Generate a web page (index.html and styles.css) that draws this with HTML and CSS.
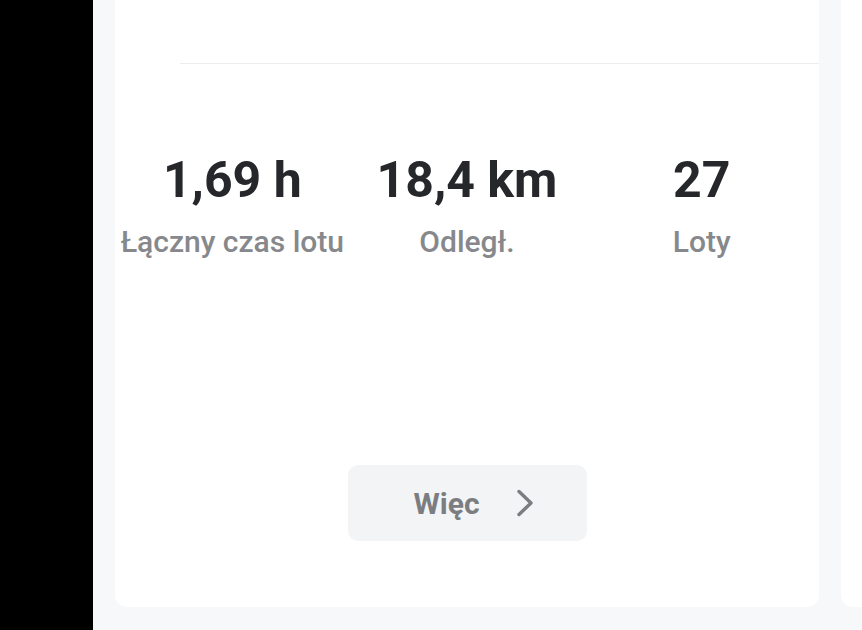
FILE: index.html
```html
<!DOCTYPE html>
<html lang="pl">
<head>
<meta charset="utf-8">
<link rel="stylesheet" href="styles.css">
</head>
<body>
<div class="screen">
  <div class="side"></div>
  <div class="main">
    <div class="card">
      <div class="divider"></div>
      <div class="stats">
        <div class="stat">
          <div class="value">1,69 h</div>
          <div class="label">Łączny czas lotu</div>
        </div>
        <div class="stat">
          <div class="value">18,4 km</div>
          <div class="label">Odległ.</div>
        </div>
        <div class="stat">
          <div class="value">27</div>
          <div class="label">Loty</div>
        </div>
      </div>
      <div class="more-wrap">
        <div class="more">
          <span class="more-text">Więc</span>
          <svg class="chev" width="18" height="28" viewBox="0 0 18 28"><path d="M3 2.5 L15 14 L3 25.5" fill="none" stroke="#7b7d81" stroke-width="3.4" stroke-linecap="round" stroke-linejoin="round"/></svg>
        </div>
      </div>
    </div>
    <div class="card2"></div>
  </div>
</div>
</body>
</html>
```
FILE: styles.css
```css
html, body {
  margin: 0;
  padding: 0;
}
body {
  width: 862px;
  height: 630px;
  overflow: hidden;
  background: #f7f8fa;
  font-family: Roboto, "Liberation Sans", sans-serif;
}
.screen {
  display: flex;
  height: 630px;
}
.side {
  width: 93px;
  background: #000;
  flex-shrink: 0;
}
.main {
  flex: 1;
  display: flex;
  gap: 22px;
  padding-left: 22px;
  align-items: flex-start;
}
.card {
  width: 704px;
  height: 620px;
  margin-top: -13px;
  background: #fff;
  border-radius: 12px;
  flex-shrink: 0;
  display: flex;
  flex-direction: column;
}
.card2 {
  width: 40px;
  height: 620px;
  margin-top: -13px;
  background: #fff;
  border-radius: 12px;
  flex-shrink: 0;
}
.divider {
  margin-top: 76px;
  margin-left: 65px;
  height: 1px;
  background: #ededee;
}
.stats {
  display: grid;
  grid-template-columns: repeat(3, 1fr);
  margin-top: 86px;
}
.stat {
  display: flex;
  flex-direction: column;
  align-items: center;
}
.value {
  font-size: 50px;
  font-weight: 700;
  color: #25272a;
  line-height: 60px;
}
.label {
  font-size: 30px;
  font-weight: 500;
  color: #86888b;
  line-height: 34px;
  margin-top: 15px;
}
.more-wrap {
  display: flex;
  justify-content: center;
  margin-top: 206px;
}
.more {
  width: 239px;
  height: 76px;
  background: #f3f4f6;
  border-radius: 10px;
  display: flex;
  align-items: center;
  justify-content: flex-start;
  gap: 36px;
  padding-left: 66px;
  box-sizing: border-box;
}
.more-text {
  font-size: 30px;
  font-weight: 700;
  color: #7b7d81;
}
.chev {
  display: block;
}
```
